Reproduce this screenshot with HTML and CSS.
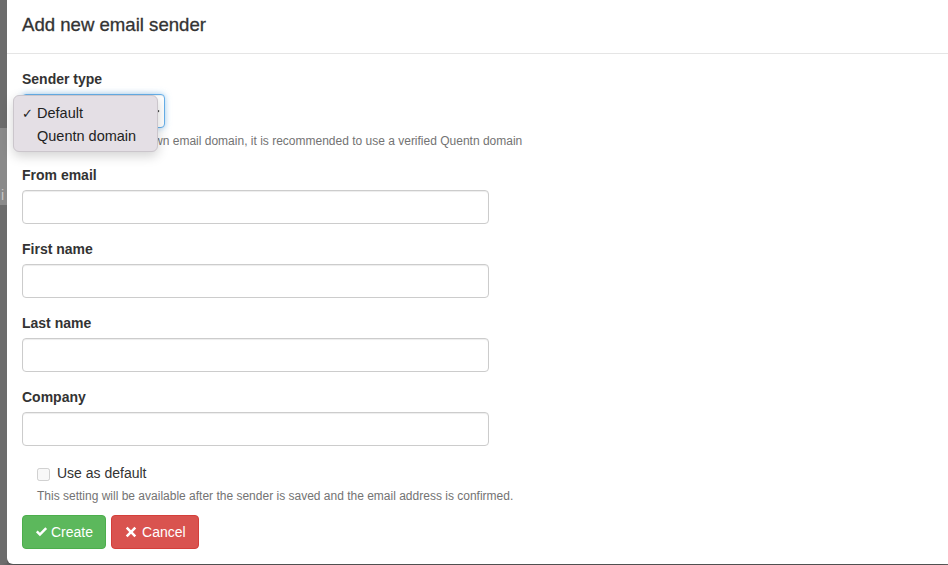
FILE: index.html
```html
<!DOCTYPE html>
<html>
<head>
  <title>Add new email sender</title>
  <link rel="stylesheet" href="styles.css">
</head>
<body>
  <div class="backdrop-edge">
    <span class="page-peek">i</span>
  </div>
  <div class="modal">
    <div class="modal-header">
      <h4 class="modal-title">Add new email sender</h4>
    </div>

    <div class="modal-body">
      <div class="form-group">
        <label for="senderType">Sender type</label>
        <div class="select-wrap">
          <select id="senderType" class="form-control select-focus">
            <option>Default</option>
            <option>Quentn domain</option>
          </select>
          <svg class="select-arrow" width="8" height="6" viewBox="0 0 8 6"><path d="M1 1.5 L4 4.5 L7 1.5" fill="none" stroke="#333" stroke-width="1.4"/></svg>
          <div class="select-menu">
            <div class="menu-item"><span class="tick">&#10003;</span>Default</div>
            <div class="menu-item">Quentn domain</div>
          </div>
        </div>
        <p class="help-block">If you do not have your own email domain, it is recommended to use a verified Quentn domain</p>
      </div>

      <div class="form-group">
        <label for="fromEmail">From email</label>
        <input type="email" id="fromEmail" class="form-control">
      </div>

      <div class="form-group">
        <label for="firstName">First name</label>
        <input type="text" id="firstName" class="form-control">
      </div>

      <div class="form-group">
        <label for="lastName">Last name</label>
        <input type="text" id="lastName" class="form-control">
      </div>

      <div class="form-group">
        <label for="company">Company</label>
        <input type="text" id="company" class="form-control">
      </div>

      <div class="checkbox-group">
        <label class="checkbox">
          <input type="checkbox" id="useDefault" disabled>
          Use as default
        </label>
        <p class="help-block">This setting will be available after the sender is saved and the email address is confirmed.</p>
      </div>

      <div class="actions">
        <button class="btn btn-success">
          <svg width="13" height="12" viewBox="0 0 14 12"><path d="M1 6.3 L2.9 4.4 L5.3 6.8 L11.1 1 L13 2.9 L5.3 10.6 Z" fill="#fff"/></svg>
          Create
        </button>
        <button class="btn btn-danger">
          <svg width="12" height="12" viewBox="0 0 12 12"><path d="M2.6 0.8 L6 4.2 L9.4 0.8 L11.2 2.6 L7.8 6 L11.2 9.4 L9.4 11.2 L6 7.8 L2.6 11.2 L0.8 9.4 L4.2 6 L0.8 2.6 Z" fill="#fff"/></svg>
          Cancel
        </button>
      </div>
    </div>
  </div>
</body>
</html>
```

FILE: styles.css
```css
/* Page behind the dialog */
html, body {
  height: 100%;
}

body {
  margin: 0;
  background-color: #707070;
  font-family: "Liberation Sans", Arial, sans-serif;
  font-size: 14px;
  line-height: 1.42857;
  color: #333;
  overflow: hidden;
  display: flex;
  align-items: flex-start;
}

.backdrop-edge {
  width: 7px;
  flex-shrink: 0;
  height: 563px;
  position: relative;
  background: linear-gradient(#6c6c6c 0, #6c6c6c 128px, #8a8a8a 128px, #8a8a8a 205px, #6c6c6c 205px);
}

.page-peek {
  position: absolute;
  top: 186px;
  left: 1px;
  color: #c9c9c9;
  font-size: 14px;
}

/* Dialog */
.modal {
  flex: 1;
  margin-top: -3px;
  background-color: #fff;
  border-radius: 0 0 0 6px;
  box-shadow: 0 3px 9px rgba(0, 0, 0, 0.4);
}

.modal-header {
  padding: 15px;
  border-bottom: 1px solid #e5e5e5;
}

.modal-title {
  margin: 0;
  font-size: 18.6px;
  font-weight: normal;
  line-height: 26px;
  color: #333;
  -webkit-text-stroke: 0.3px #333;
}

.modal-body {
  padding: 16px 15px 15px;
}

.form-group {
  margin-bottom: 16px;
}

.form-group label {
  display: block;
  margin-bottom: 4px;
  font-weight: bold;
}

.form-control {
  display: block;
  box-sizing: border-box;
  width: 467px;
  height: 34px;
  padding: 6px 12px;
  font-family: inherit;
  font-size: 14px;
  color: #555;
  background-color: #fff;
  border: 1px solid #ccc;
  border-radius: 4px;
  box-shadow: inset 0 1px 1px rgba(0, 0, 0, 0.075);
}

/* Sender type select, shown open */
.select-wrap {
  position: relative;
  width: 143px;
}

.select-focus {
  width: 143px;
  appearance: none;
  -webkit-appearance: none;
  border-color: #66afe9;
  box-shadow: inset 0 1px 1px rgba(0, 0, 0, 0.075), 0 0 6px rgba(102, 175, 233, 0.6);
}

.select-arrow {
  position: absolute;
  right: 5px;
  top: 15px;
}

.select-menu {
  position: absolute;
  top: 1px;
  left: -9px;
  width: 145px;
  box-sizing: border-box;
  padding: 6px 0 3px;
  background-color: #e4dfe5;
  border: 1px solid #cbc6cc;
  border-radius: 6px;
  box-shadow: 0 4px 12px rgba(0, 0, 0, 0.18);
  font-size: 14.5px;
  color: #222;
}

.menu-item {
  position: relative;
  padding-left: 23px;
  line-height: 23px;
}

.menu-item .tick {
  position: absolute;
  left: 8px;
  font-size: 13px;
}

.help-block {
  margin: 5px 0 10px;
  font-size: 12px;
  color: #737373;
}

/* Use as default */
.checkbox-group {
  padding-left: 15px;
  margin-bottom: 10px;
}

.checkbox {
  display: flex;
  align-items: center;
  gap: 7px;
  padding-top: 2px;
  color: #333;
}

.checkbox input {
  margin: 0;
  width: 13px;
  height: 13px;
}

.checkbox-group .help-block {
  margin: 4px 0 0;
}

/* Buttons */
.actions {
  display: flex;
  gap: 5px;
}

.btn {
  display: inline-flex;
  align-items: center;
  gap: 3px;
  height: 34px;
  padding: 6px 12px;
  font-family: inherit;
  font-size: 14px;
  color: #fff;
  border: 1px solid transparent;
  border-radius: 4px;
  cursor: pointer;
}

.btn-success {
  background-color: #5cb85c;
  border-color: #4cae4c;
}

.btn-danger {
  gap: 5px;
  padding: 6px 12px 6px 13px;
  background-color: #d9534f;
  border-color: #d43f3a;
}
```
